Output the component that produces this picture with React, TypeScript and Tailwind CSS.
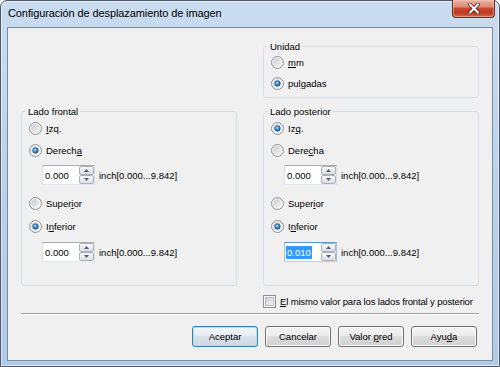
import React from "react";

function Radio({ checked }: { checked?: boolean }) {
  return (
    <svg width="13" height="13" viewBox="0 0 13 13" className="shrink-0">
      <defs>
        <linearGradient id="rbg" x1="0" y1="0" x2="1" y2="1">
          <stop offset="0" stopColor="#c4c8ce" />
          <stop offset="1" stopColor="#f9f9f9" />
        </linearGradient>
        <radialGradient id="rdot" cx="0.4" cy="0.35" r="0.75">
          <stop offset="0" stopColor="#b5e3fc" />
          <stop offset="0.45" stopColor="#3f93d3" />
          <stop offset="1" stopColor="#15487a" />
        </radialGradient>
      </defs>
      <circle cx="6.5" cy="6.5" r="6" fill="#f6f6f6" stroke="#8d9095" />
      <circle cx="6.5" cy="6.5" r="4.4" fill="url(#rbg)" />
      {checked && (
        <circle cx="6.5" cy="6.5" r="2.7" fill="url(#rdot)" stroke="#1b4d7c" strokeWidth="0.7" />
      )}
    </svg>
  );
}

function Opt({
  checked,
  children,
  className,
}: {
  checked?: boolean;
  children: React.ReactNode;
  className: string;
}) {
  return (
    <div className={`flex items-center h-[13px] gap-[4px] ${className}`}>
      <Radio checked={checked} />
      <span className="leading-[13px] whitespace-nowrap">{children}</span>
    </div>
  );
}

function SpinBtn({ up }: { up?: boolean }) {
  return (
    <div className="h-[9px] w-[15px] rounded-[2px] border border-[#a9b0ba] bg-[linear-gradient(#f8f8f8,#e9eaec_55%,#dcdee2)] flex items-center justify-center">
      <svg width="5" height="3" viewBox="0 0 5 3">
        {up ? (
          <path d="M0 3 L2.5 0 L5 3 Z" fill="#4a5f82" />
        ) : (
          <path d="M0 0 L2.5 3 L5 0 Z" fill="#4a5f82" />
        )}
      </svg>
    </div>
  );
}

function SpinInput({ value, focused, className }: { value: string; focused?: boolean; className: string }) {
  return (
    <div className={`flex items-center h-[20px] ml-[13px] ${className}`}>
      <div
        className={`flex h-[20px] w-[53px] border bg-white ${
          focused
            ? "border-[#5b95c9] border-x-[#9cc2e4] border-b-[#b7d4ee]"
            : "border-[#abadb3] border-x-[#dbdfe6] border-b-[#e3e9ef]"
        }`}
      >
        <div className={`flex-1 flex items-center ${focused ? "pl-[1px]" : "pl-[2px]"}`}>
          {focused ? (
            <span className="bg-[#3399ff] text-white px-[1px] leading-[13px]">{value}</span>
          ) : (
            <span className="leading-[13px]">{value}</span>
          )}
        </div>
        <div className="flex flex-col w-[15px]">
          <SpinBtn up />
          <SpinBtn />
        </div>
      </div>
      <span className="ml-[4px] leading-[13px] whitespace-nowrap">inch[0.000...9.842]</span>
    </div>
  );
}

function Group({ title, children, className }: { title: string; children: React.ReactNode; className: string }) {
  return (
    <div className={`relative w-[216px] border border-[#d5dfe5] rounded-[3px] ${className}`}>
      <span className="absolute -top-[7px] left-[4px] px-[2px] bg-[#f0f0f0] leading-[13px] whitespace-nowrap">
        {title}
      </span>
      {children}
    </div>
  );
}

function Btn({ children, def }: { children: React.ReactNode; def?: boolean }) {
  return (
    <button
      type="button"
      className={`w-[66px] h-[21px] rounded-[3px] border flex items-center justify-center text-black ${
        def
          ? "border-[#3c7fb1] bg-[linear-gradient(#f1f6f9,#e5ecf1_50%,#d8e1e8_50%,#cdd8e1)] shadow-[inset_0_0_0_1px_#a9e0f7]"
          : "border-[#707070] bg-[linear-gradient(#f3f3f3,#ebebeb_50%,#dddddd_50%,#cfcfcf)] shadow-[inset_0_0_0_1px_#fbfbfb]"
      }`}
    >
      <span className="leading-[13px] whitespace-nowrap">{children}</span>
    </button>
  );
}

export default function App() {
  return (
    <div className="w-[500px] h-[367px] bg-white overflow-hidden">
      <div className="h-full flex flex-col rounded-t-[7px] border border-[#4d5868] bg-[linear-gradient(#c9dcf0,#bed3ec_40%,#b1cae8)] px-[6px] pb-[5px] shadow-[inset_0_0_0_1px_rgba(255,255,255,0.55)]">
        {/* Title bar */}
        <div className="h-[26px] flex justify-between items-start">
          <span className="ml-[1px] mt-[6px] text-[11px] leading-[13px] text-black font-['Liberation_Sans',Arial,sans-serif] tracking-[-0.1px] whitespace-nowrap">
            Configuración de desplazamiento de imagen
          </span>
          <div className="-mt-[1px] -mr-[2px] w-[43px] h-[18px] rounded-b-[4px] border border-t-0 border-[#6e2a1e] bg-[linear-gradient(#eab2a4,#dc8a75_40%,#c8472f_50%,#c0391f_75%,#d56a4f)] shadow-[inset_0_0_0_1px_rgba(255,210,200,0.45)] flex items-center justify-center">
            <svg width="12" height="11" viewBox="0 0 12 11">
              <path d="M2 1.5 L10 9.5 M10 1.5 L2 9.5" stroke="#4b1a12" strokeWidth="3.6" strokeLinecap="square" />
              <path d="M2 1.5 L10 9.5 M10 1.5 L2 9.5" stroke="#ffffff" strokeWidth="2" strokeLinecap="square" />
            </svg>
          </div>
        </div>

        {/* Client area */}
        <div className="flex-1 border border-[#7b8a9c] bg-[#f0f0f0] flex flex-col px-[13px] pt-[18px] text-[9.5px] text-black font-['Liberation_Sans',Arial,sans-serif]">
          <div className="grid grid-cols-[216px_216px] gap-x-[26px]">
            <Group title="Lado frontal" className="self-end">
              <div className="pl-[7px] pb-[23px] flex flex-col">
                <Opt className="mt-[10px]">
                  <u>I</u>zq.
                </Opt>
                <Opt checked className="mt-[9px]">
                  Derech<u>a</u>
                </Opt>
                <SpinInput value="0.000" className="mt-[8px]" />
                <Opt className="mt-[12px]">
                  Super<u>i</u>or
                </Opt>
                <Opt checked className="mt-[10px]">
                  I<u>n</u>ferior
                </Opt>
                <SpinInput value="0.000" className="mt-[9px]" />
              </div>
            </Group>

            <div className="flex flex-col">
              <Group title="Unidad" className="">
                <div className="pl-[7px] pb-[7px] flex flex-col">
                  <Opt className="mt-[9px]">
                    <u>m</u>m
                  </Opt>
                  <Opt checked className="mt-[8px]">
                    pul<u>g</u>adas
                  </Opt>
                </div>
              </Group>
              <Group title="Lado posterior" className="mt-[13px]">
                <div className="pl-[7px] pb-[23px] flex flex-col">
                  <Opt checked className="mt-[10px]">
                    Iz<u>q</u>.
                  </Opt>
                  <Opt className="mt-[9px]">
                    Dere<u>c</u>ha
                  </Opt>
                  <SpinInput value="0.000" className="mt-[8px]" />
                  <Opt className="mt-[12px]">
                    Super<u>i</u>or
                  </Opt>
                  <Opt checked className="mt-[10px]">
                    I<u>n</u>ferior
                  </Opt>
                  <SpinInput value="0.010" focused className="mt-[9px]" />
                </div>
              </Group>
            </div>

            <div />
            <div className="mt-[9px] flex items-center h-[13px] gap-[4px]">
              <div className="w-[13px] h-[13px] border border-[#8d9095] bg-[#f6f6f6] p-[1px] shrink-0">
                <div className="w-full h-full border border-[#b7bcc3] bg-[linear-gradient(135deg,#cdd1d7,#f7f7f7)]" />
              </div>
              <span className="leading-[13px] whitespace-nowrap tracking-[-0.15px]">
                <u>E</u>l mismo valor para los lados frontal y posterior
              </span>
            </div>
          </div>

          <div className="mt-[5px] h-[2px] border-t border-[#a0a0a0] border-b border-b-white" />

          <div className="mt-[11px] flex justify-end gap-[7px] pr-[2px]">
            <Btn def>Aceptar</Btn>
            <Btn>Cancelar</Btn>
            <Btn>
              Valor <u>p</u>red
            </Btn>
            <Btn>
              Ayu<u>d</u>a
            </Btn>
          </div>
        </div>
      </div>
    </div>
  );
}
